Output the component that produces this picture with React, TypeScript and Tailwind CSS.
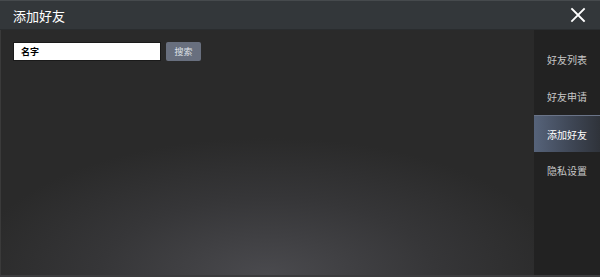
const tabs = ["好友列表", "好友申请", "添加好友", "隐私设置"];

export default function App() {
  const active = "添加好友";

  return (
    <div
      className="w-[600px] h-[277px] flex flex-col overflow-hidden bg-[#282828] text-white"
      style={{ fontFamily: '"Noto Sans CJK SC", "Noto Sans", sans-serif' }}
    >
      {/* Header */}
      <div className="h-[30px] shrink-0 flex items-center justify-between pl-[13px] pr-[14px] bg-[#33373a] border-t border-[#464a4d] border-b border-b-[#2a2d2f]">
        <span className="text-[13px] leading-none text-white">添加好友</span>
        <svg width="16" height="16" viewBox="0 0 16 16" className="mt-[-1px]">
          <path
            d="M2 2L14 14M14 2L2 14"
            stroke="#ffffff"
            strokeWidth={1.8}
            strokeLinecap="square"
          />
        </svg>
      </div>

      {/* Body */}
      <div className="flex-1 flex min-h-0 border-b-2 border-[#3c3c3e]">
        <div className="flex-1 relative border-l border-[#3a3a3a] bg-[radial-gradient(ellipse_70%_70%_at_50%_100%,#4a4a4e_0%,#363638_45%,#2a2a2a_80%)]">
          <div className="flex items-center gap-[5px] pl-[12px] pt-[12px]">
            <div className="w-[148px] h-[19px] bg-white border border-[#1a1a1a] flex items-center pl-[7px]">
              <span className="text-[9px] font-bold text-black leading-none">名字</span>
            </div>
            <button className="w-[35px] h-[19px] rounded-[2px] bg-[#686f7e] text-[9px] text-[#dfe2e8] leading-none">
              搜索
            </button>
          </div>
        </div>

        {/* Sidebar */}
        <div className="w-[66px] shrink-0 bg-[#222222] flex flex-col pt-[11px]">
          {tabs.map((t) => (
            <div
              key={t}
              className={
                t === active
                  ? "h-[37px] flex items-center justify-center text-[10px] text-white bg-[linear-gradient(90deg,#56637a_0%,#3f4756_55%,#2f333a_100%)] border-t border-[#6a7488]"
                  : "h-[37px] flex items-center justify-center text-[10px] text-[#c8c8c8]"
              }
            >
              {t}
            </div>
          ))}
        </div>
      </div>
    </div>
  );
}
